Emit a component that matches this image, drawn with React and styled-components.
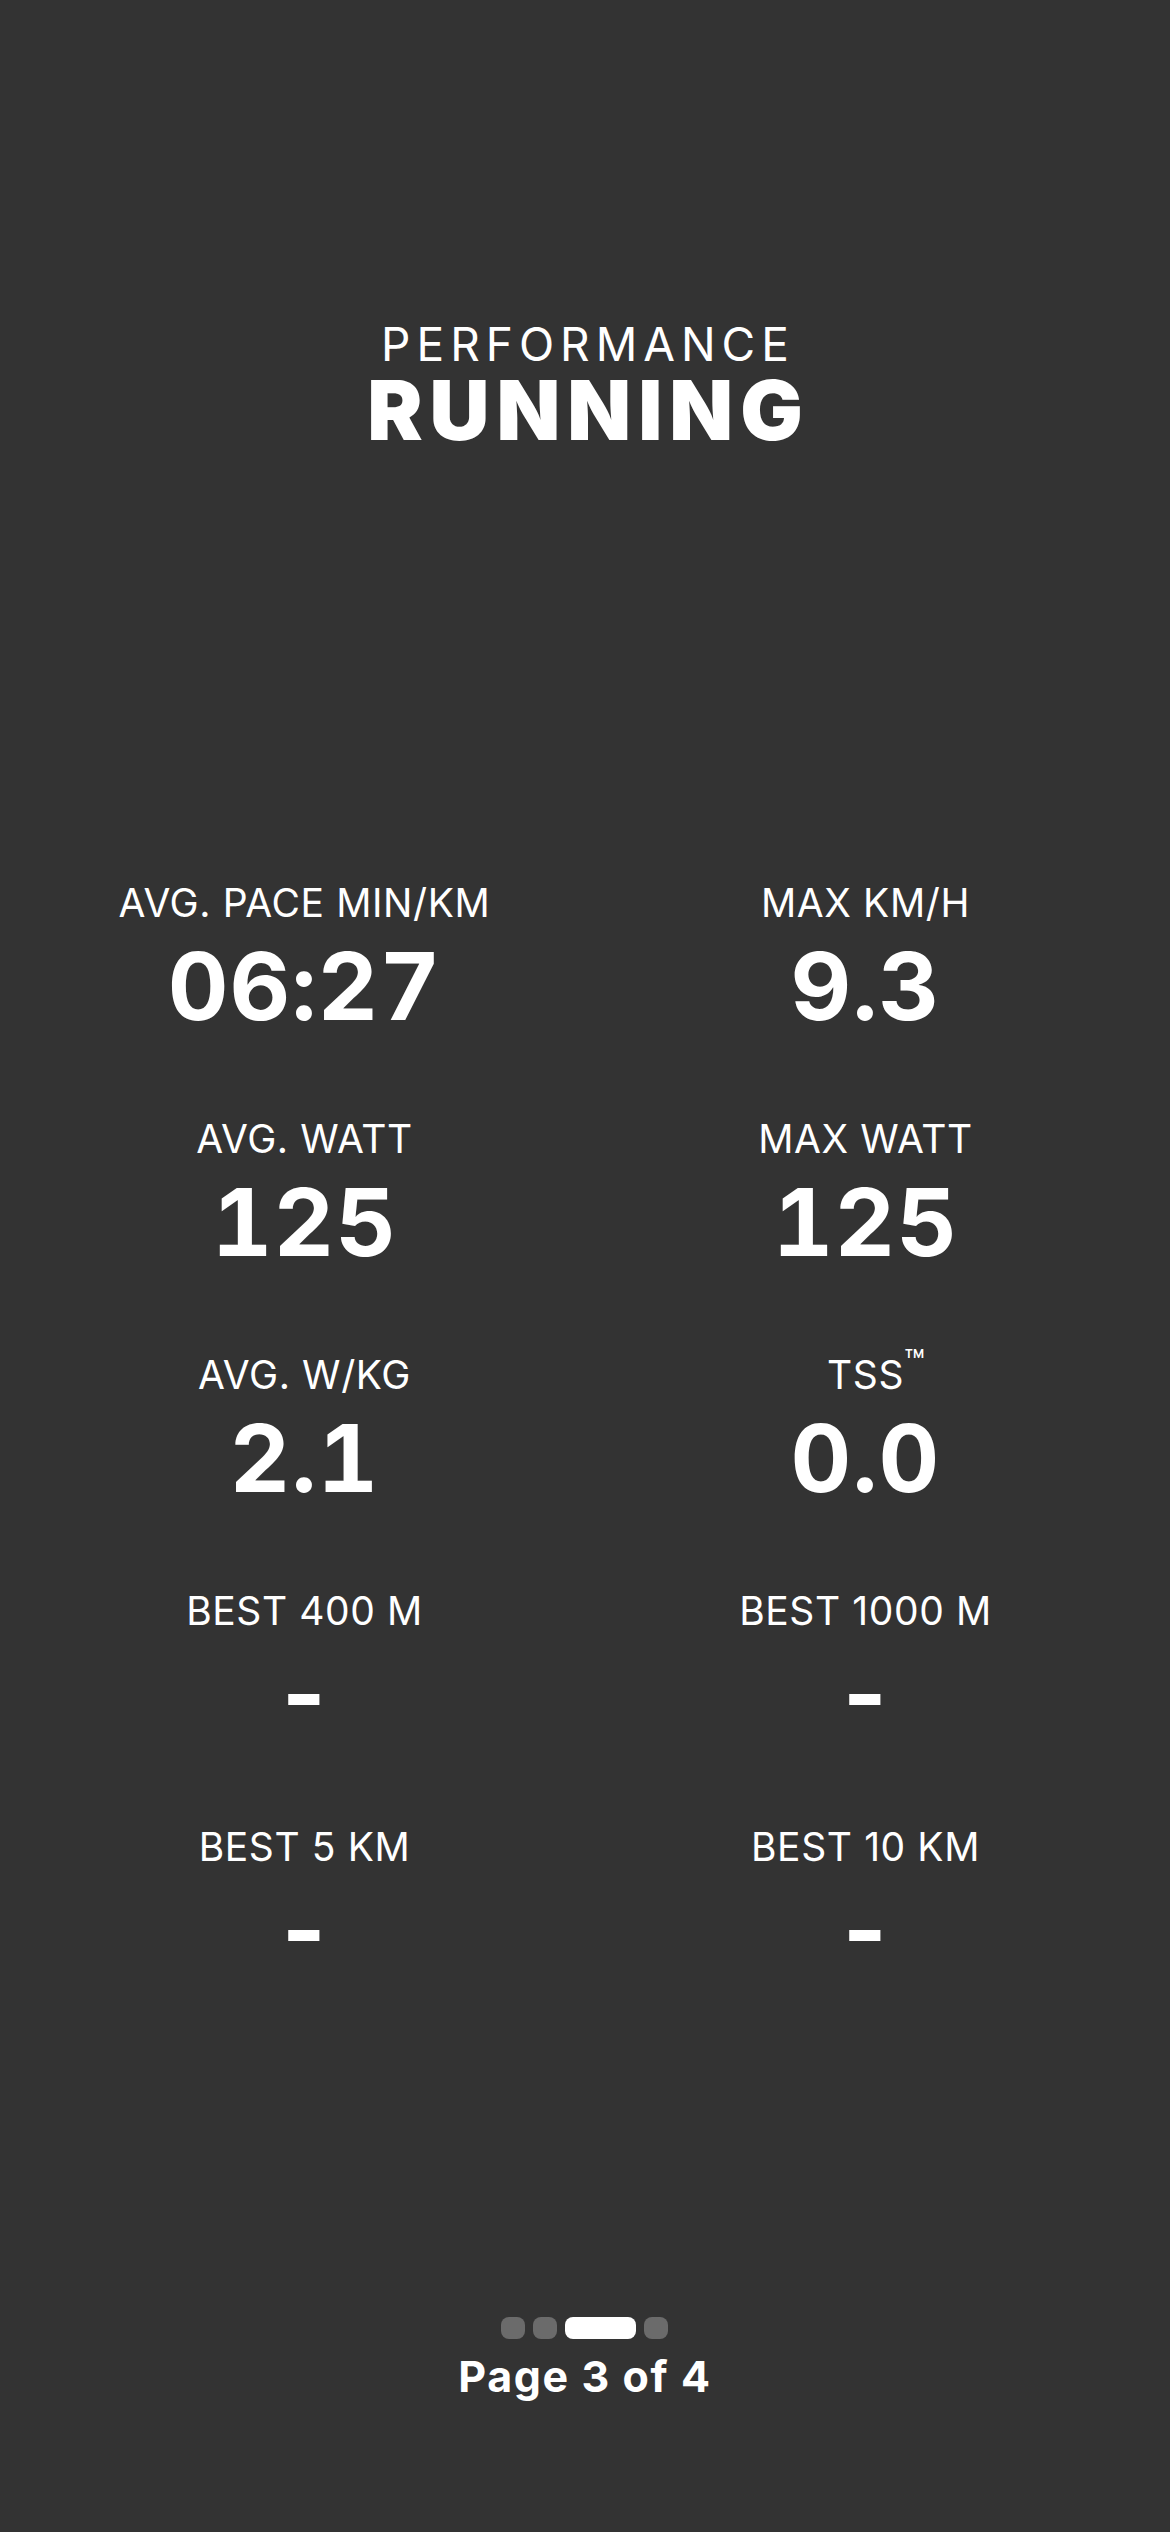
import React from 'react';
import styled, { createGlobalStyle } from 'styled-components';

const GlobalStyle = createGlobalStyle`
  html, body {
    margin: 0;
    padding: 0;
    background: #333333;
  }
  body {
    font-family: Inter, "Noto Sans", "Liberation Sans", sans-serif;
    color: #ffffff;
  }
`;

const Screen = styled.div`
  width: 1170px;
  min-height: 2532px;
  box-sizing: border-box;
  display: flex;
  flex-direction: column;
  align-items: center;
  background: #333333;
  padding-top: 321px;
`;

const Header = styled.header`
  display: flex;
  flex-direction: column;
  align-items: center;
  gap: 2px;
`;

const Kicker = styled.div`
  font-size: 46px;
  line-height: 1;
  font-weight: 400;
  letter-spacing: 6px;
  margin-right: -6px;
`;

const Title = styled.h1`
  margin: 0;
  font-size: 83px;
  line-height: 1;
  font-weight: 900;
  letter-spacing: 7px;
  margin-right: -7px;
`;

const Stats = styled.section`
  width: 100%;
  box-sizing: border-box;
  padding: 0 24px;
  margin-top: 431px;
  display: grid;
  grid-template-columns: 1fr 1fr;
  row-gap: 86px;
`;

const Stat = styled.div`
  display: flex;
  flex-direction: column;
  align-items: center;
`;

const Label = styled.div`
  position: relative;
  font-size: 39px;
  line-height: 1;
  font-weight: 400;
  letter-spacing: 0.6px;
  white-space: nowrap;
`;

// superscript mark hangs off the label so the label itself stays centred
const Trademark = styled.span`
  position: absolute;
  left: 100%;
  top: -10px;
  font-size: 34px;
  line-height: 1;
  letter-spacing: 0;
`;

const Value = styled.div`
  margin-top: 17px;
  font-size: 94px;
  line-height: 1;
  font-weight: 700;
  letter-spacing: 1px;
  font-variant-numeric: tabular-nums;
`;

const Footer = styled.footer`
  margin-top: auto;
  margin-bottom: 134px;
  display: flex;
  flex-direction: column;
  align-items: center;
  gap: 16px;
`;

const Dots = styled.div`
  display: flex;
  gap: 8px;
`;

const Dot = styled.span`
  display: block;
  width: ${p => (p.$active ? '71px' : '24px')};
  height: 22px;
  border-radius: 8px;
  background: ${p => (p.$active ? '#ffffff' : '#6b6b6b')};
`;

const PageLabel = styled.div`
  font-size: 43px;
  line-height: 1;
  font-weight: 700;
  letter-spacing: 1.6px;
`;

const stats = [
  { label: 'AVG. PACE MIN/KM', value: '06:27' },
  { label: 'MAX KM/H', value: '9.3' },
  { label: 'AVG. WATT', value: '125' },
  { label: 'MAX WATT', value: '125' },
  { label: 'AVG. W/KG', value: '2.1' },
  { label: 'TSS', value: '0.0', tm: true },
  { label: 'BEST 400 M', value: '-' },
  { label: 'BEST 1000 M', value: '-' },
  { label: 'BEST 5 KM', value: '-' },
  { label: 'BEST 10 KM', value: '-' },
];

const App = () => {
  return (
    <>
      <GlobalStyle />
      <Screen>
        <Header>
          <Kicker>PERFORMANCE</Kicker>
          <Title>RUNNING</Title>
        </Header>

        <Stats>
          {stats.map(s => (
            <Stat key={s.label}>
              <Label>
                {s.label}
                {s.tm && <Trademark>™</Trademark>}
              </Label>
              <Value>{s.value}</Value>
            </Stat>
          ))}
        </Stats>

        <Footer>
          <Dots>
            <Dot />
            <Dot />
            <Dot $active />
            <Dot />
          </Dots>
          <PageLabel>Page 3 of 4</PageLabel>
        </Footer>
      </Screen>
    </>
  );
};

export default App;
